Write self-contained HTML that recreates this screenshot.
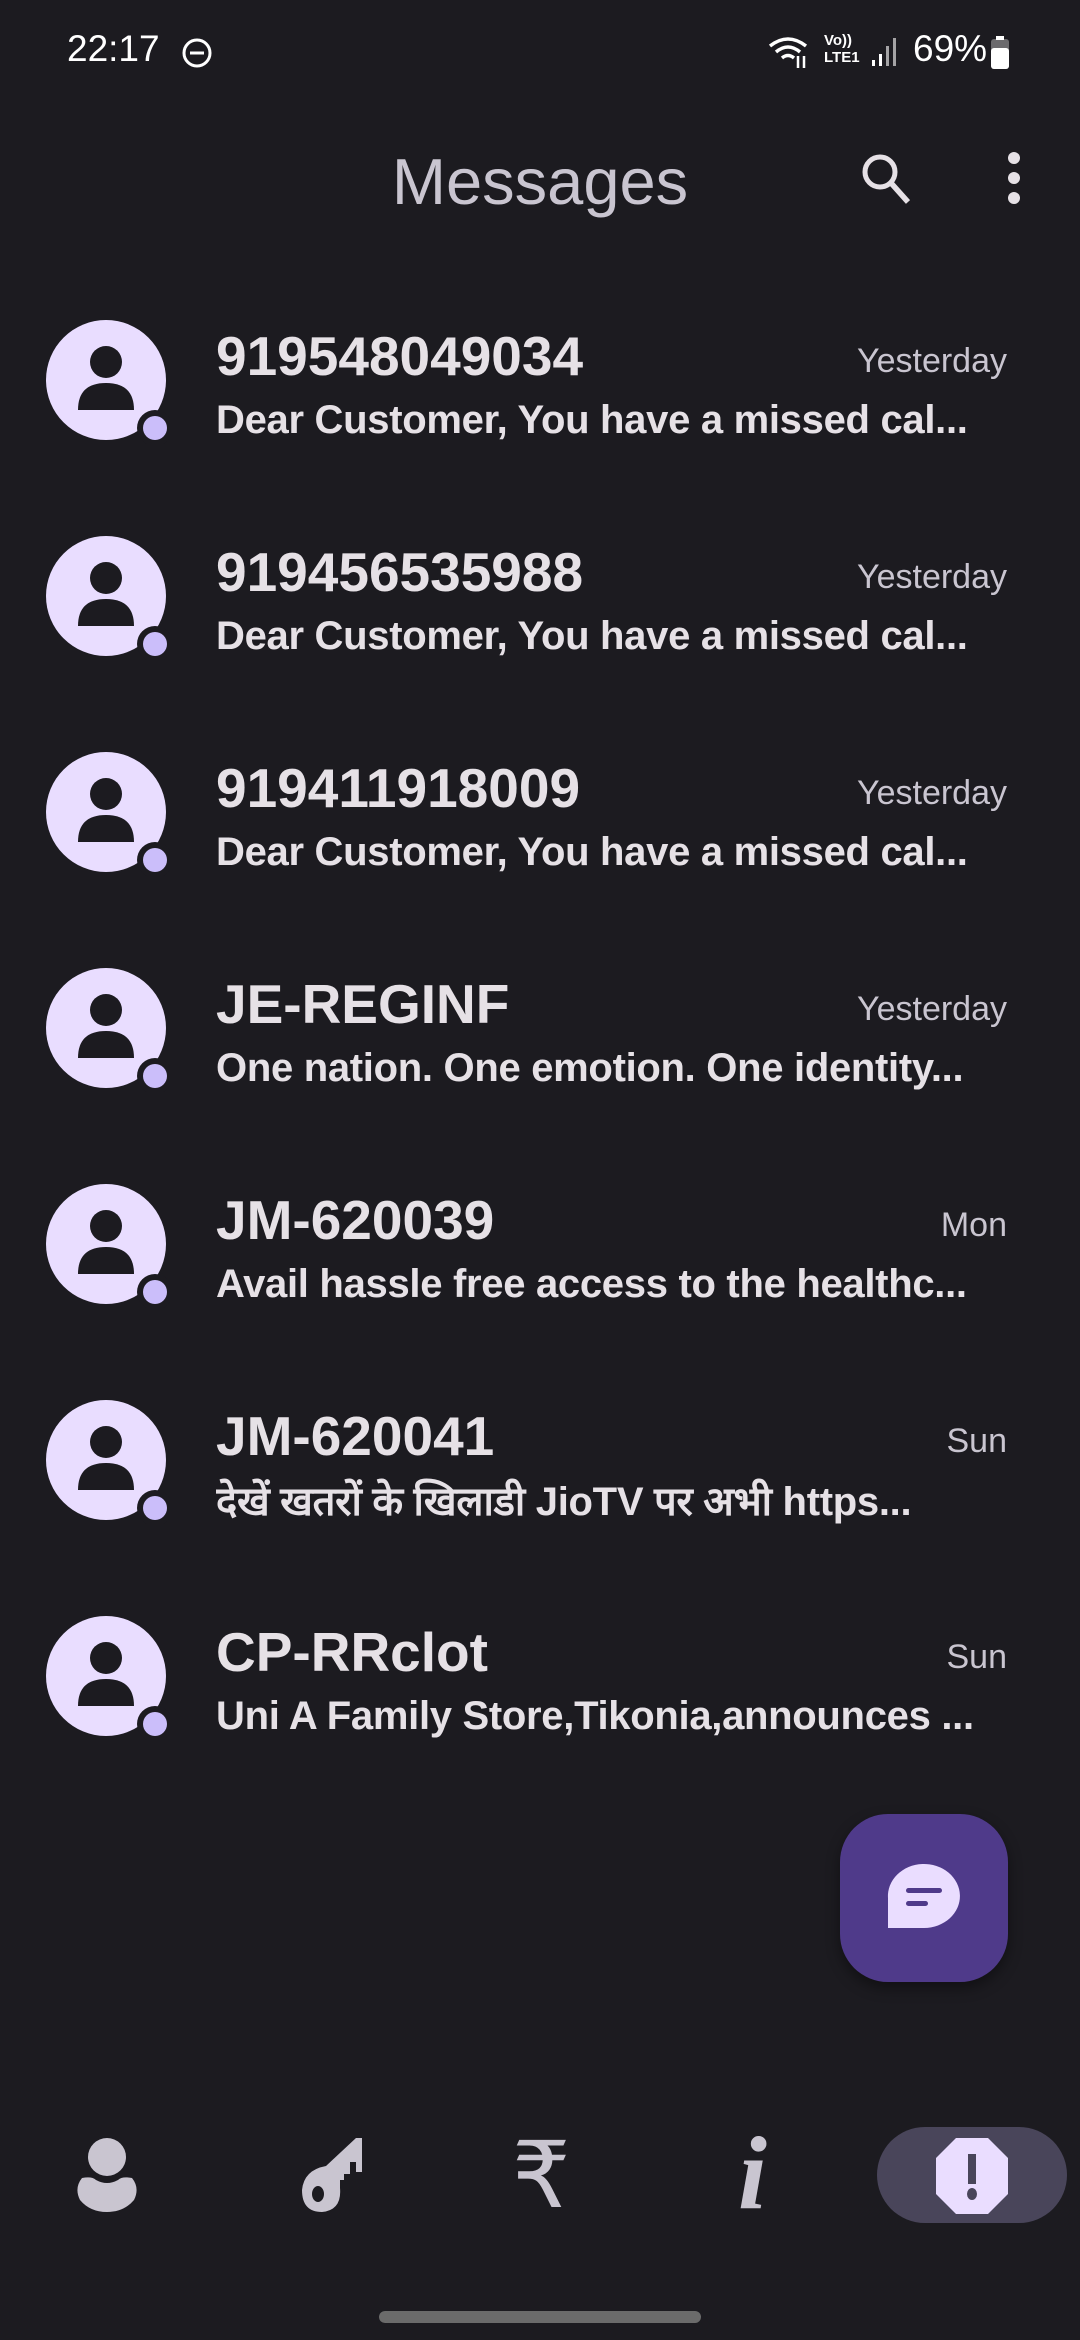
<!DOCTYPE html>
<html><head><meta charset="utf-8"><style>
*{margin:0;padding:0;box-sizing:border-box}
body{width:1080px;height:2340px;background:#1c1b20;font-family:"Liberation Sans","Noto Sans CJK SC",sans-serif;position:relative;overflow:hidden;color:#e6e1e6}
.abs{position:absolute}
.row{position:absolute;left:0;width:1080px;height:216px}
.av{position:absolute;left:46px;top:0;width:124px;height:124px}
.name{position:absolute;left:216px;top:4px;font-size:55px;font-weight:bold;color:#e6e1e6;letter-spacing:0px;white-space:nowrap}
.time{position:absolute;right:73px;top:22px;font-size:34px;color:#c9c5d0;white-space:nowrap}
.prev{position:absolute;left:216px;top:78px;width:760px;font-size:40px;font-weight:bold;color:#e6e1e6;white-space:nowrap;overflow:hidden;letter-spacing:-0.3px}
</style></head><body>
<div class="abs" style="left:67px;top:28px;font-size:37px;color:#fff">22:17</div>
<svg class="abs" style="left:180px;top:36px" width="34" height="34" viewBox="0 0 34 34"><circle cx="17" cy="17" r="13" fill="none" stroke="#fff" stroke-width="3"/><rect x="10" y="15.5" width="14" height="3" fill="#fff"/></svg>
<svg class="abs" style="left:766px;top:34px" width="48" height="36" viewBox="0 0 48 36"><path d="M4 12 Q22 -2 40 12" stroke="#fff" stroke-width="3.5" fill="none"/><path d="M10 18 Q22 8 34 18" stroke="#fff" stroke-width="3.5" fill="none"/><path d="M16 24 Q22 19 28 24" stroke="#fff" stroke-width="3.5" fill="none"/><path d="M32 22v12M38 34V22" stroke="#fff" stroke-width="2.5"/></svg>
<div class="abs" style="left:824px;top:32px;font-size:15px;line-height:17px;color:#fff;font-weight:bold">Vo))<br>LTE1</div>
<svg class="abs" style="left:870px;top:36px" width="30" height="32" viewBox="0 0 30 32"><rect x="2" y="24" width="3" height="6" fill="#fff"/><rect x="9" y="18" width="3" height="12" fill="#fff"/><rect x="16" y="10" width="3" height="20" fill="#fff" opacity=".6"/><rect x="23" y="2" width="3" height="28" fill="#fff" opacity=".6"/></svg>
<div class="abs" style="left:913px;top:28px;font-size:37px;color:#fff">69%</div>
<svg class="abs" style="left:990px;top:36px" width="20" height="34" viewBox="0 0 20 34"><rect x="6" y="0" width="8" height="4" fill="#fff"/><rect x="1" y="3" width="18" height="30" rx="3" fill="#fff" opacity=".35"/><rect x="1" y="12" width="18" height="21" rx="3" fill="#fff"/></svg>

<div class="abs" style="left:0;width:1080px;text-align:center;top:144px;font-size:65px;color:#c9c5d0">Messages</div>
<svg class="abs" style="left:856px;top:148px" width="60" height="60" viewBox="0 0 60 60"><circle cx="24" cy="24" r="15" fill="none" stroke="#e6e1e6" stroke-width="5"/><path d="M35 35 L52 54" stroke="#e6e1e6" stroke-width="5.5"/></svg>
<svg class="abs" style="left:1004px;top:150px" width="20" height="56" viewBox="0 0 20 56"><circle cx="10" cy="8" r="6" fill="#e6e1e6"/><circle cx="10" cy="28" r="6" fill="#e6e1e6"/><circle cx="10" cy="48" r="6" fill="#e6e1e6"/></svg>

<div class="row" style="top:320px">
<svg class="av" viewBox="0 0 124 124"><circle cx="60" cy="60" r="60" fill="#e9ddff"/><circle cx="60" cy="42" r="16" fill="#1c1b20"/><path d="M32 90 Q32 63 60 63 Q88 63 88 90 Z" fill="#1c1b20"/><circle cx="109" cy="108" r="18" fill="#1c1b20"/><circle cx="109" cy="108" r="12" fill="#cbbefa"/></svg>
<div class="name">919548049034</div><div class="time">Yesterday</div><div class="prev">Dear Customer, You have a missed cal...</div></div>

<div class="row" style="top:536px">
<svg class="av" viewBox="0 0 124 124"><circle cx="60" cy="60" r="60" fill="#e9ddff"/><circle cx="60" cy="42" r="16" fill="#1c1b20"/><path d="M32 90 Q32 63 60 63 Q88 63 88 90 Z" fill="#1c1b20"/><circle cx="109" cy="108" r="18" fill="#1c1b20"/><circle cx="109" cy="108" r="12" fill="#cbbefa"/></svg>
<div class="name">919456535988</div><div class="time">Yesterday</div><div class="prev">Dear Customer, You have a missed cal...</div></div>

<div class="row" style="top:752px">
<svg class="av" viewBox="0 0 124 124"><circle cx="60" cy="60" r="60" fill="#e9ddff"/><circle cx="60" cy="42" r="16" fill="#1c1b20"/><path d="M32 90 Q32 63 60 63 Q88 63 88 90 Z" fill="#1c1b20"/><circle cx="109" cy="108" r="18" fill="#1c1b20"/><circle cx="109" cy="108" r="12" fill="#cbbefa"/></svg>
<div class="name">919411918009</div><div class="time">Yesterday</div><div class="prev">Dear Customer, You have a missed cal...</div></div>

<div class="row" style="top:968px">
<svg class="av" viewBox="0 0 124 124"><circle cx="60" cy="60" r="60" fill="#e9ddff"/><circle cx="60" cy="42" r="16" fill="#1c1b20"/><path d="M32 90 Q32 63 60 63 Q88 63 88 90 Z" fill="#1c1b20"/><circle cx="109" cy="108" r="18" fill="#1c1b20"/><circle cx="109" cy="108" r="12" fill="#cbbefa"/></svg>
<div class="name">JE-REGINF</div><div class="time">Yesterday</div><div class="prev">One nation. One emotion. One identity...</div></div>

<div class="row" style="top:1184px">
<svg class="av" viewBox="0 0 124 124"><circle cx="60" cy="60" r="60" fill="#e9ddff"/><circle cx="60" cy="42" r="16" fill="#1c1b20"/><path d="M32 90 Q32 63 60 63 Q88 63 88 90 Z" fill="#1c1b20"/><circle cx="109" cy="108" r="18" fill="#1c1b20"/><circle cx="109" cy="108" r="12" fill="#cbbefa"/></svg>
<div class="name">JM-620039</div><div class="time">Mon</div><div class="prev">Avail hassle free access to the healthc...</div></div>

<div class="row" style="top:1400px">
<svg class="av" viewBox="0 0 124 124"><circle cx="60" cy="60" r="60" fill="#e9ddff"/><circle cx="60" cy="42" r="16" fill="#1c1b20"/><path d="M32 90 Q32 63 60 63 Q88 63 88 90 Z" fill="#1c1b20"/><circle cx="109" cy="108" r="18" fill="#1c1b20"/><circle cx="109" cy="108" r="12" fill="#cbbefa"/></svg>
<div class="name">JM-620041</div><div class="time">Sun</div><div class="prev" style="top:72px;font-family:'Liberation Sans','Noto Sans CJK SC','DejaVu Sans',sans-serif">देखें खतरों के खिलाडी JioTV पर अभी https...</div></div>

<div class="row" style="top:1616px">
<svg class="av" viewBox="0 0 124 124"><circle cx="60" cy="60" r="60" fill="#e9ddff"/><circle cx="60" cy="42" r="16" fill="#1c1b20"/><path d="M32 90 Q32 63 60 63 Q88 63 88 90 Z" fill="#1c1b20"/><circle cx="109" cy="108" r="18" fill="#1c1b20"/><circle cx="109" cy="108" r="12" fill="#cbbefa"/></svg>
<div class="name">CP-RRclot</div><div class="time">Sun</div><div class="prev">Uni A Family Store,Tikonia,announces ...</div></div>

<div class="abs" style="left:840px;top:1814px;width:168px;height:168px;border-radius:48px;background:#4f3a8a;box-shadow:0 6px 14px rgba(0,0,0,.4)"></div>
<svg class="abs" style="left:884px;top:1858px" width="80" height="80" viewBox="0 0 80 80"><path d="M4 70 V40 A36 32 0 1 1 40 70 Z" fill="#eaddff"/><rect x="22" y="30" width="36" height="5" rx="2.5" fill="#4f3a8a"/><rect x="22" y="43" width="22" height="5" rx="2.5" fill="#4f3a8a"/></svg>

<div class="abs" style="left:877px;top:2127px;width:190px;height:96px;border-radius:48px;background:#49455a"></div>
<svg class="abs" style="left:72px;top:2138px" width="70" height="74" viewBox="0 0 70 74"><ellipse cx="35" cy="19" rx="19" ry="19" fill="#c9c5d0"/><path d="M10 40 Q20 38 24 42 Q35 48 46 42 Q50 38 60 40 Q68 50 62 62 Q52 74 35 74 Q18 74 8 62 Q2 50 10 40Z" fill="#c9c5d0"/></svg>
<svg class="abs" style="left:284px;top:2138px" width="80" height="76" viewBox="0 0 80 76"><path d="M72 0 H78 V34 H72 V24 H66 V36 H60 V42 H56 V50 Q58 72 38 74 Q18 74 18 52 Q20 32 42 28 Z" fill="#c9c5d0"/><ellipse cx="34" cy="56" rx="6" ry="8" fill="#1c1b20"/></svg>
<div class="abs" style="left:512px;top:2128px;font-size:92px;line-height:96px;color:#c9c5d0;font-family:'DejaVu Sans',sans-serif">₹</div>
<div class="abs" style="left:738px;top:2122px;font-size:104px;line-height:104px;color:#c9c5d0;font-family:'Liberation Serif',serif;font-style:italic;font-weight:bold">i</div>
<svg class="abs" style="left:936px;top:2138px" width="72" height="76" viewBox="0 0 72 76"><path d="M20 0 H52 L72 20 V56 L52 76 H20 L0 56 V20 Z" fill="#eaddff"/><rect x="32" y="16" width="8" height="30" fill="#49455a"/><ellipse cx="36" cy="56" rx="5" ry="6" fill="#49455a"/></svg>
<div class="abs" style="left:379px;top:2311px;width:322px;height:12px;border-radius:6px;background:#6b6b6b"></div>
</body></html>
